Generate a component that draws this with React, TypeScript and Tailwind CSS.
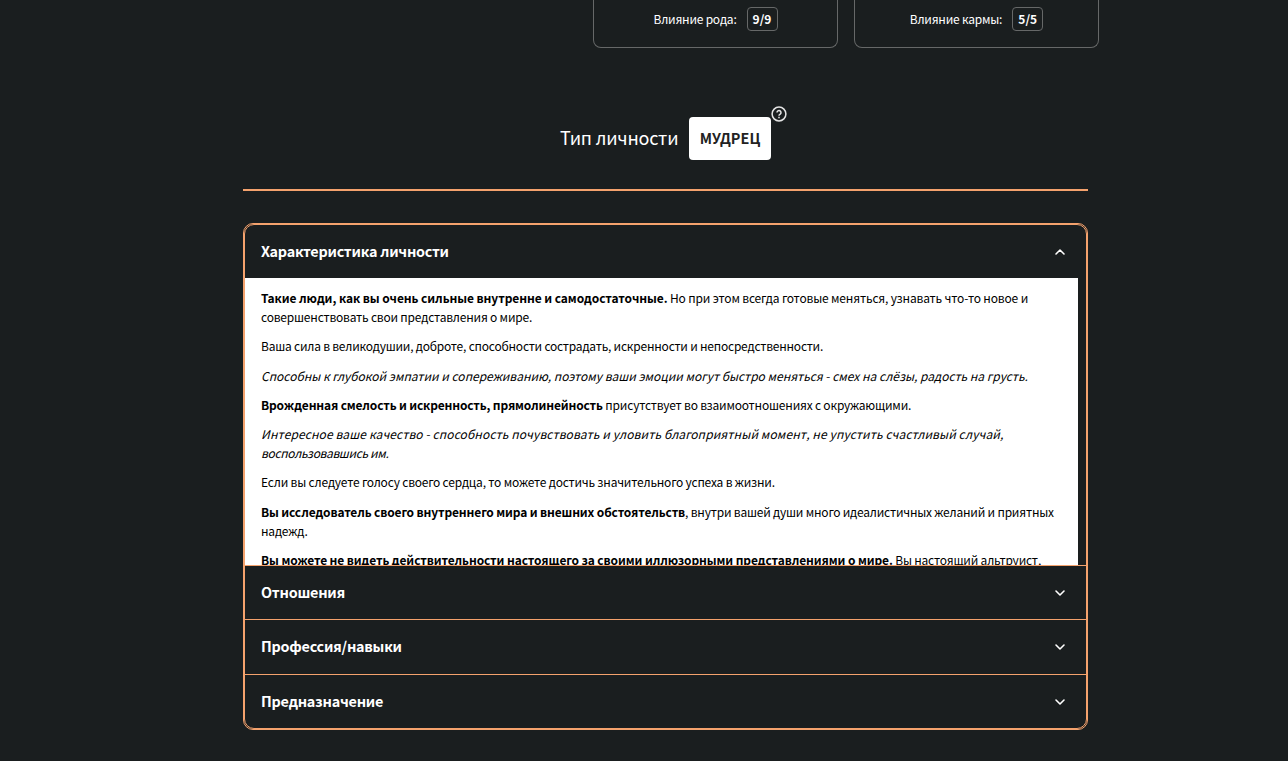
import type { ReactNode } from 'react';
import { ChevronDown, ChevronUp } from 'lucide-react';

const BORDER = 'border-[#f4a26d]';

function InfluenceCard({ label, value }: { label: string; value: string }) {
  return (
    <div className="flex h-12 w-[245px] items-start justify-center rounded-b-lg border border-t-0 border-[#666868] pt-[7px]">
      <div className="flex h-6 items-center gap-[10px] text-[12px]">
        <span className="pb-px tracking-[-0.22px] whitespace-nowrap">{label}</span>
        <span className="flex h-6 w-[31px] items-center justify-center rounded-[4px] border border-[#666868] pb-px font-bold">{value}</span>
      </div>
    </div>
  );
}

function HelpIcon() {
  return (
    <svg className="absolute -top-[11px] left-[82px] h-4 w-4" viewBox="0 0 16 16" fill="none" stroke="#e4e4e4" strokeWidth="1.5">
      <circle cx="8" cy="8" r="6.9" />
      <path d="M6 6.5a2 2 0 1 1 3.2 1.6C8.4 8.6 8 8.9 8 9.7" />
      <path d="M8 10.8v1.4" />
    </svg>
  );
}

function Row({ title, open, className = '' }: { title: string; open?: boolean; className?: string }) {
  const Icon = open ? ChevronUp : ChevronDown;
  return (
    <button className={`flex w-full shrink-0 items-center justify-between pr-[18px] pl-4 text-left text-[14.4px] font-bold tracking-[-0.25px] ${className}`}>
      <span className="pb-0.5">{title}</span>
      <Icon className="h-4 w-4" strokeWidth={2.4} />
    </button>
  );
}

function P({ children }: { children: ReactNode }) {
  return <p className="mb-[10.75px] whitespace-nowrap">{children}</p>;
}

function B({ children, className = 'tracking-[-0.14px]' }: { children: ReactNode; className?: string }) {
  return <b className={className}>{children}</b>;
}

export default function App() {
  return (
    <div className="h-[761px] overflow-hidden bg-[#1a1e1f] font-['Noto_Sans_CJK_SC','Noto_Sans',sans-serif] text-white">
      <div className="ml-[593px] flex gap-4">
        <InfluenceCard label="Влияние рода:" value="9/9" />
        <InfluenceCard label="Влияние кармы:" value="5/5" />
      </div>

      <div className="ml-[243px] w-[845px]">
        <div className={`flex h-[143px] items-start border-b-2 pt-[69px] pl-[317px] ${BORDER}`}>
          <h2 className="flex h-[43px] w-[129px] items-center pb-0.5 text-[18px] tracking-[-0.18px] whitespace-nowrap">Тип личности</h2>
          <div className="relative flex h-[43px] w-[82px] items-center justify-center rounded-[4px] bg-white pb-0.5 text-[14.4px] font-bold tracking-[0.1px] text-[#222]">
            МУДРЕЦ
            <HelpIcon />
          </div>
        </div>

        <div className={`mt-8 h-[507px] rounded-[10px] border ${BORDER}`}>
          <div className={`flex h-[505px] flex-col overflow-hidden rounded-[10px] border ${BORDER}`}>
            <Row title="Характеристика личности" open className="h-[53px]" />
            <div className="mr-2 h-[287px] shrink-0 overflow-hidden bg-white pt-[11px] pl-4 text-[12px] leading-[18.67px] tracking-[-0.2px] text-black">
              <P>
                <B className="tracking-[-0.08px]">Такие люди, как вы очень сильные внутренне и самодостаточные.</B>
                <span className="tracking-[-0.16px]"> Но при этом всегда готовые меняться, узнавать что-то новое и</span><br />
                совершенствовать свои представления о мире.
              </P>
              <P><span className="tracking-[-0.22px]">Ваша сила в великодушии, доброте, способности сострадать, искренности и непосредственности.</span></P>
              <P><i className="tracking-[-0.01px]">Способны к глубокой эмпатии и сопереживанию, поэтому ваши эмоции могут быстро меняться - смех на слёзы, радость на грусть.</i></P>
              <P><B className="tracking-[-0.16px]">Врожденная смелость и искренность, прямолинейность</B> присутствует во взаимоотношениях с окружающими.</P>
              <P>
                <i className="tracking-[0.1px]">Интересное ваше качество - способность почувствовать и уловить благоприятный момент, не упустить счастливый случай,</i><br />
                <i className="tracking-[-0.35px]">воспользовавшись им.</i>
              </P>
              <P>Если вы следуете голосу своего сердца, то можете достичь значительного успеха в жизни.</P>
              <P>
                <B>Вы исследователь своего внутреннего мира и внешних обстоятельств</B>, внутри вашей души много идеалистичных желаний и приятных<br />
                надежд.
              </P>
              <P><B className="tracking-[-0.11px]">Вы можете не видеть действительности настоящего за своими иллюзорными представлениями о мире.</B> Вы настоящий альтруист,</P>
            </div>
            <Row title="Отношения" className={`h-[54px] border-t ${BORDER}`} />
            <Row title="Профессия/навыки" className={`h-[55px] border-t ${BORDER}`} />
            <Row title="Предназначение" className={`h-[54px] border-t ${BORDER}`} />
          </div>
        </div>
      </div>
    </div>
  );
}
